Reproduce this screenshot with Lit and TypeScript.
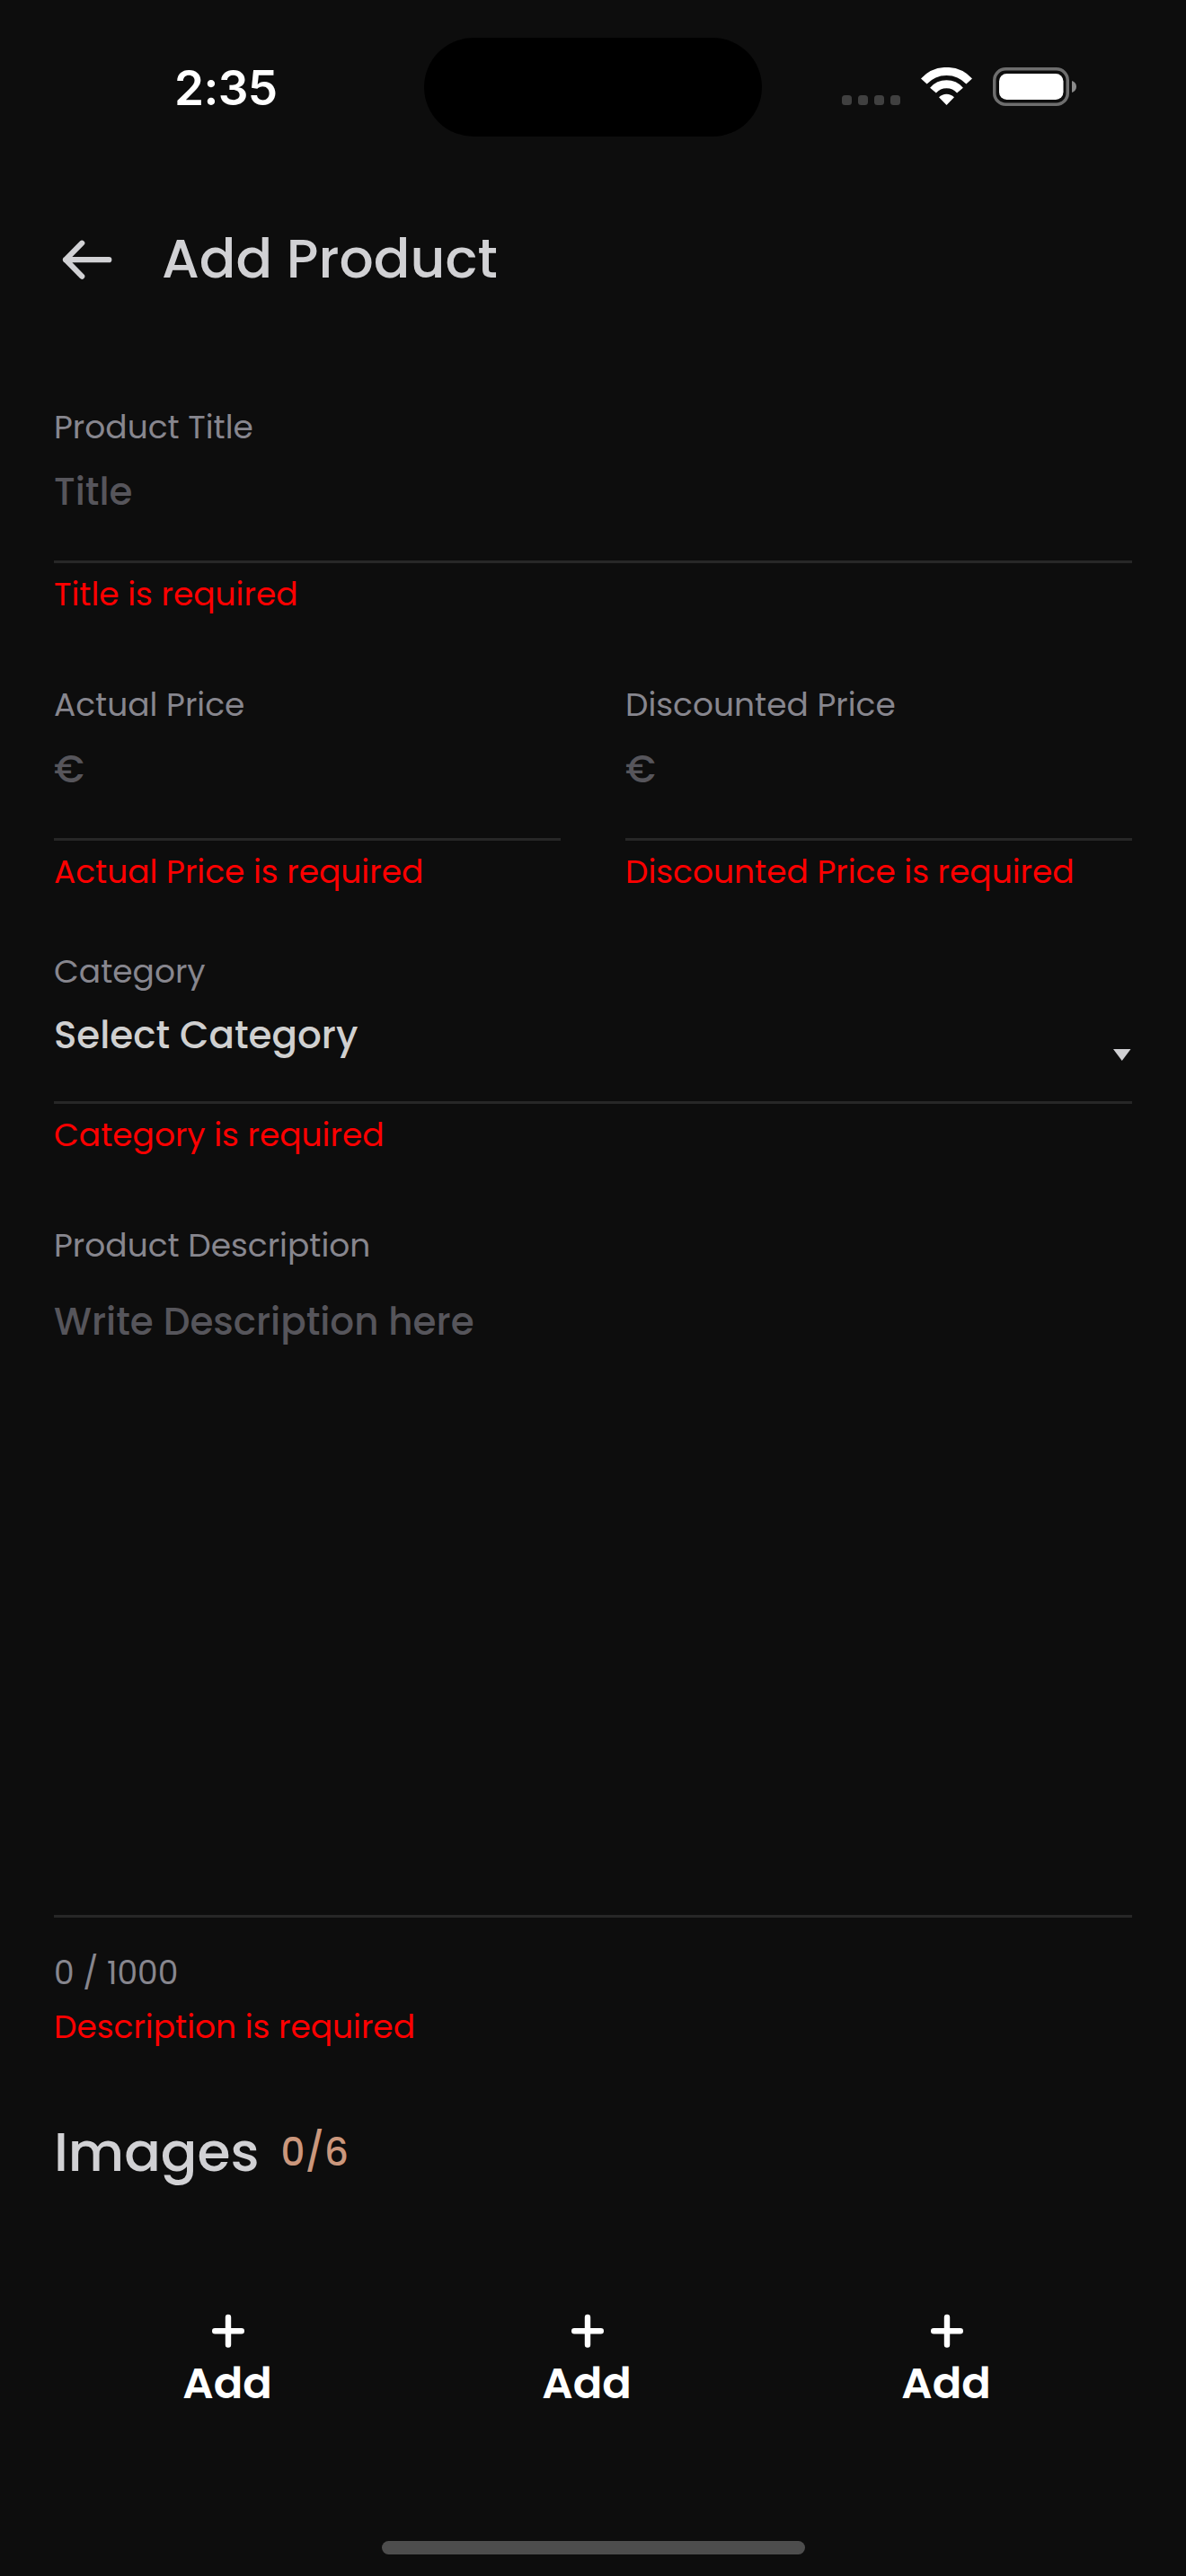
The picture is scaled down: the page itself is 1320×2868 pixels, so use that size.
import { LitElement, html, css, svg, nothing } from "lit";
import { customElement, property } from "lit/decorators.js";

const shared = css`
  * {
    box-sizing: border-box;
  }
  .label,
  .error {
    font-size: 36px;
    line-height: 55px;
    white-space: nowrap;
  }
  .label {
    color: #87868e;
  }
  .error {
    color: #ff0000;
    margin-top: 7px;
  }
`;

@customElement("status-bar")
export class StatusBar extends LitElement {
  static styles = css`
    :host {
      display: grid;
      grid-template-columns: 278px 376px 1fr;
      align-items: center;
      height: 194px;
      padding-left: 194px;
    }
    .time {
      padding-top: 2px;
      font-family: Inter, "Liberation Sans", sans-serif;
      font-size: 53px;
      line-height: 60px;
      font-weight: 600;
      letter-spacing: -0.6px;
      color: #fff;
    }
    .island {
      height: 110px;
      border-radius: 55px;
      background: #000;
    }
    .icons {
      display: flex;
      align-self: start;
      gap: 23px;
      padding: 75px 0 0 89px;
    }
    svg {
      display: block;
    }
  `;

  render() {
    return html`
      <div class="time">2:35</div>
      <div class="island"></div>
      <div class="icons">
        <svg width="65" height="43" viewBox="0 0 65 43" fill="#404040">
          ${[0, 18, 36, 54].map(
            (x) => svg`<rect x=${x} y="31" width="11" height="11" rx="3.5" />`
          )}
        </svg>
        <svg width="57" height="43" viewBox="0 0 57 43" fill="none" stroke="#fff" stroke-width="9">
          <path d="M3.3 15.5A34.2 34.2 0 0 1 53.7 15.5" />
          <path d="M13.5 25.6A19.9 19.9 0 0 1 43.5 25.6" />
          <path d="M20 33.3A12 12 0 0 1 37 33.3L28.5 42Z" fill="#fff" stroke="none" />
        </svg>
        <svg width="93" height="43" viewBox="0 0 93 43">
          <rect x="1.75" y="1.75" width="81.5" height="39.5" rx="12.5" fill="none" stroke="#6e6e6e" stroke-width="3.5" />
          <rect x="7" y="7" width="71.5" height="29" rx="8.5" fill="#fff" />
          <path d="M88 15C91.2 16 93 18.5 93 21.5S91.2 27 88 28Z" fill="#8a8a8a" />
        </svg>
      </div>
    `;
  }
}

@customElement("form-field")
export class FormField extends LitElement {
  @property() label = "";
  @property() value = "";
  @property() error = "";
  @property() counter = "";
  @property() kind: "input" | "currency" | "select" | "area" = "input";

  static styles = [
    shared,
    css`
      :host {
        display: block;
      }
      .box {
        display: flex;
        justify-content: space-between;
        align-items: flex-start;
        border-bottom: 3px solid #272727;
      }
      .input,
      .currency {
        height: 109px;
        margin-top: 15px;
      }
      .select {
        height: 106px;
        margin-top: 14px;
      }
      .area {
        height: 693px;
        margin-top: 28px;
      }
      .value {
        font-size: 42px;
        line-height: 59px;
        font-weight: 500;
        color: #56555b;
        white-space: nowrap;
      }
      .select .value {
        color: #d0d0d0;
      }
      .counter {
        margin: 34px 0 -2px;
      }
      .caret {
        display: block;
        margin: 45px 1px 0 0;
      }
    `,
  ];

  render() {
    return html`
      <div class="label">${this.label}</div>
      <div class="box ${this.kind}">
        <div class="value">${this.value}</div>
        ${this.kind === "select"
          ? html`<svg class="caret" width="20" height="13" viewBox="0 0 20 13">
              <path d="M0 0H19.5L9.75 13Z" fill="#d0d0d3" />
            </svg>`
          : nothing}
      </div>
      ${this.counter ? html`<div class="label counter">${this.counter}</div>` : nothing}
      <div class="error">${this.error}</div>
    `;
  }
}

@customElement("add-tile")
export class AddTile extends LitElement {
  static styles = css`
    :host {
      display: flex;
      flex-direction: column;
      align-items: center;
      gap: 6px;
      color: #fff;
      font-size: 48px;
      line-height: 67px;
      font-weight: 600;
    }
    svg {
      display: block;
    }
    .text {
      padding-right: 2px;
    }
  `;

  render() {
    return html`
      <svg width="38" height="38" viewBox="0 0 38 38" stroke="#fff" stroke-width="6.4" stroke-linecap="round">
        <path d="M19 3.9V34.5M4.2 19.2H33.8" />
      </svg>
      <span class="text">Add</span>
    `;
  }
}

@customElement("app-root")
export class AppRoot extends LitElement {
  static styles = [
    shared,
    css`
      :host {
        display: flex;
        flex-direction: column;
        box-sizing: border-box;
        width: 1320px;
        height: 2868px;
        background: #0d0d0d;
        font-family: Poppins, Inter, "Liberation Sans", sans-serif;
      }
      .header {
        display: flex;
        align-items: center;
        gap: 54px;
        height: 190px;
        padding-left: 68px;
      }
      .back {
        display: block;
      }
      .title,
      .heading {
        font-size: 60px;
        line-height: 84px;
        font-weight: 500;
        color: #d1d1d4;
      }
      .title {
        padding-bottom: 2px;
      }
      .form {
        display: flex;
        flex-direction: column;
        gap: 68px;
        padding: 64px 60px 0;
      }
      .prices {
        display: grid;
        grid-template-columns: 1fr 1fr;
        gap: 72px;
        margin-bottom: -12px;
      }
      .images {
        display: flex;
        align-items: flex-start;
        gap: 24px;
        padding: 70px 60px 0;
      }
      .count {
        margin-top: 13px;
        font-size: 42px;
        line-height: 59px;
        font-weight: 500;
        color: #cb977c;
      }
      .tiles {
        display: grid;
        grid-template-columns: repeat(3, 400px);
        padding: 138px 66px 0 54px;
      }
      .home {
        width: 471px;
        height: 15px;
        margin: auto auto 24px;
        border-radius: 8px;
        background: #4d4d4d;
      }
    `,
  ];

  render() {
    return html`
      <status-bar></status-bar>
      <div class="header">
        <svg class="back" width="58" height="46" viewBox="0 0 58 46" fill="none" stroke="#d1d1d4" stroke-width="6.2" stroke-linecap="round" stroke-linejoin="round">
          <path d="M53.3 23.2H5M23.2 4.7L5 23.2L23.2 41.7" />
        </svg>
        <div class="title">Add Product</div>
      </div>
      <div class="form">
        <form-field label="Product Title" value="Title" error="Title is required"></form-field>
        <div class="prices">
          <form-field
            kind="currency"
            label="Actual Price"
            value="€"
            error="Actual Price is required"
          ></form-field>
          <form-field
            kind="currency"
            label="Discounted Price"
            value="€"
            error="Discounted Price is required"
          ></form-field>
        </div>
        <form-field
          kind="select"
          label="Category"
          value="Select Category"
          error="Category is required"
        ></form-field>
        <form-field
          kind="area"
          label="Product Description"
          value="Write Description here"
          counter="0 / 1000"
          error="Description is required"
        ></form-field>
      </div>
      <div class="images">
        <div class="heading">Images</div>
        <div class="count">0/6</div>
      </div>
      <div class="tiles">
        <add-tile></add-tile>
        <add-tile></add-tile>
        <add-tile></add-tile>
      </div>
      <div class="home"></div>
    `;
  }
}
